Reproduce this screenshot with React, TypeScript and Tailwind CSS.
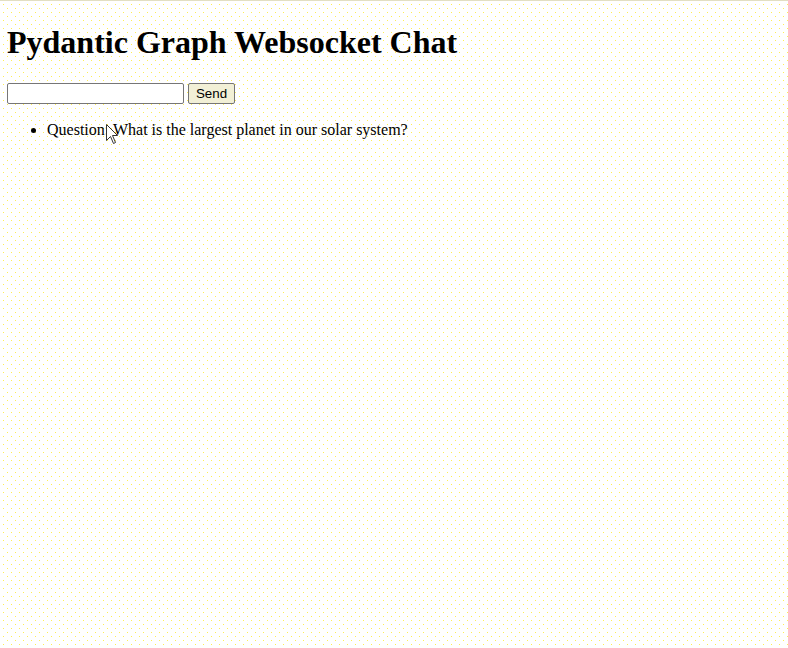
import React from "react";

export default function App() {
  return (
    <div className="relative min-h-[648px] w-full bg-white bg-[conic-gradient(at_1px_1px,transparent_75%,#ffee55_0),conic-gradient(at_1px_1px,transparent_75%,#ffee55_0)] bg-[size:8px_8px] bg-[position:3px_3px,7px_7px] border-t border-[#e2dec2] font-['Liberation_Serif','Times_New_Roman',serif] text-black">
      <div className="pl-[7px] pr-2 pt-[23px]">
        <h1 className="text-[32px] font-bold leading-[37px] mb-[22px]">Pydantic Graph Websocket Chat</h1>
        <form className="flex items-center gap-[4px] h-[21px]" onSubmit={(e) => e.preventDefault()}>
          <input
            type="text"
            className="h-[21px] w-[177px] border border-[#767676] rounded-[2px] bg-white px-[2px] text-[13.33px] font-['Liberation_Sans',Arial,sans-serif] outline-none"
          />
          <button
            type="submit"
            className="h-[21px] w-[47px] border border-[#767676] rounded-[2px] bg-[#f2f0d6] text-[13.33px] leading-[19px] font-['Liberation_Sans',Arial,sans-serif] text-black"
          >
            Send
          </button>
        </form>
        <ul className="list-disc pl-[40px] mt-[17px] text-[16px] leading-[18px]">
          <li>Question: What is the largest planet in our solar system?</li>
        </ul>
      </div>
      <svg
        className="absolute left-[105px] top-[122px]"
        width="14"
        height="22"
        viewBox="0 0 14 22"
      >
        <path
          d="M1.5 1.5 L1.5 17.5 L5.5 13.5 L8.5 20.5 L10.5 19.5 L7.5 12.5 L12.5 12.5 Z"
          fill="white"
          stroke="#333"
          strokeWidth="1"
          strokeLinejoin="miter"
        />
      </svg>
    </div>
  );
}
